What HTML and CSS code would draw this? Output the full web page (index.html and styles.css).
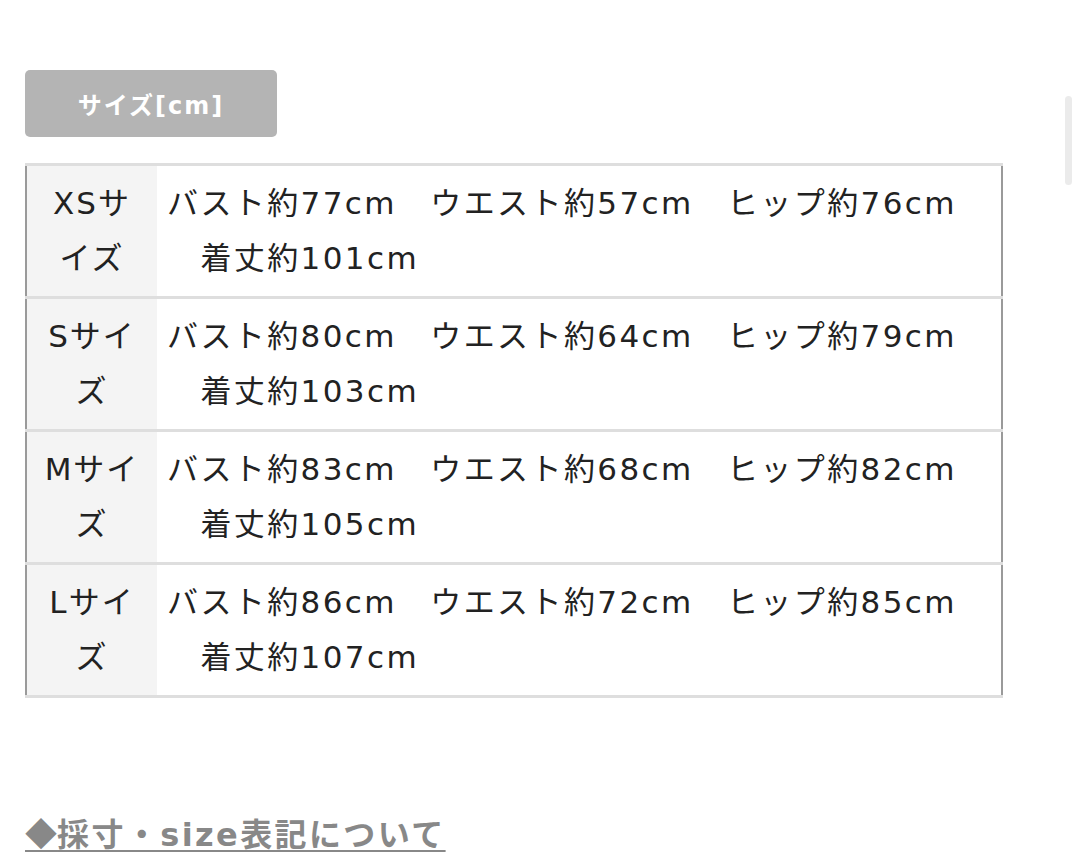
FILE: index.html
```html
<!DOCTYPE html>
<html lang="ja">
<head>
<meta charset="utf-8">
<title>サイズ</title>
<link rel="stylesheet" href="styles.css">
</head>
<body>
<div class="page">
  <div class="tab">サイズ[cm]</div>
  <table class="size-table">
    <tbody>
      <tr>
        <th>XSサイズ</th>
        <td>バスト約77cm　ウエスト約57cm　ヒップ約76cm<br>　着丈約101cm</td>
      </tr>
      <tr>
        <th>Sサイズ</th>
        <td>バスト約80cm　ウエスト約64cm　ヒップ約79cm<br>　着丈約103cm</td>
      </tr>
      <tr>
        <th>Mサイズ</th>
        <td>バスト約83cm　ウエスト約68cm　ヒップ約82cm<br>　着丈約105cm</td>
      </tr>
      <tr>
        <th>Lサイズ</th>
        <td>バスト約86cm　ウエスト約72cm　ヒップ約85cm<br>　着丈約107cm</td>
      </tr>
    </tbody>
  </table>
  <a class="guide" href="#"><span class="mark">◆</span>採寸・size表記について</a>
</div>
<div class="scroll-indicator"></div>
</body>
</html>
```

FILE: styles.css
```css
html, body {
  margin: 0;
  padding: 0;
  background: #ffffff;
}

body {
  font-family: "DejaVu Sans", "Noto Sans CJK JP", sans-serif;
  color: #222222;
}

.page {
  padding: 70px 0 0 25px;
  width: 978px;
}

.tab {
  width: 252px;
  height: 67px;
  background: #b4b4b4;
  border-radius: 5px;
  color: #ffffff;
  font-weight: bold;
  font-size: 24px;
  letter-spacing: 2px;
  display: flex;
  align-items: center;
  justify-content: center;
}

.size-table {
  margin-top: 26px;
  width: 978px;
  border-collapse: collapse;
  border-left: 2px solid #9a9a9a;
  border-right: 2px solid #9a9a9a;
  font-size: 31px;
  line-height: 55px;
  letter-spacing: 2.4px;
}

.size-table tr {
  border-top: 3px solid #dedede;
}

.size-table tr:last-child {
  border-bottom: 3px solid #dedede;
}

.size-table th {
  width: 110px;
  padding: 10px 10px;
  background: #f4f4f4;
  font-weight: normal;
  text-align: center;
  vertical-align: middle;
  letter-spacing: 2px;
}

.size-table td {
  padding: 10px 10px;
  text-align: left;
  vertical-align: middle;
}

.guide {
  display: inline-block;
  margin-top: 114px;
  font-size: 32px;
  line-height: 40px;
  font-weight: bold;
  letter-spacing: 2.4px;
  color: #888888;
  text-decoration: underline;
  text-decoration-thickness: 2px;
  text-underline-offset: 4px;
}

.guide .mark {
  font-family: "Noto Sans CJK JP", sans-serif;
  letter-spacing: 0;
}

.scroll-indicator {
  position: fixed;
  top: 96px;
  left: 1065px;
  width: 7px;
  height: 89px;
  border-radius: 4px;
  background: #ebebeb;
}
```
